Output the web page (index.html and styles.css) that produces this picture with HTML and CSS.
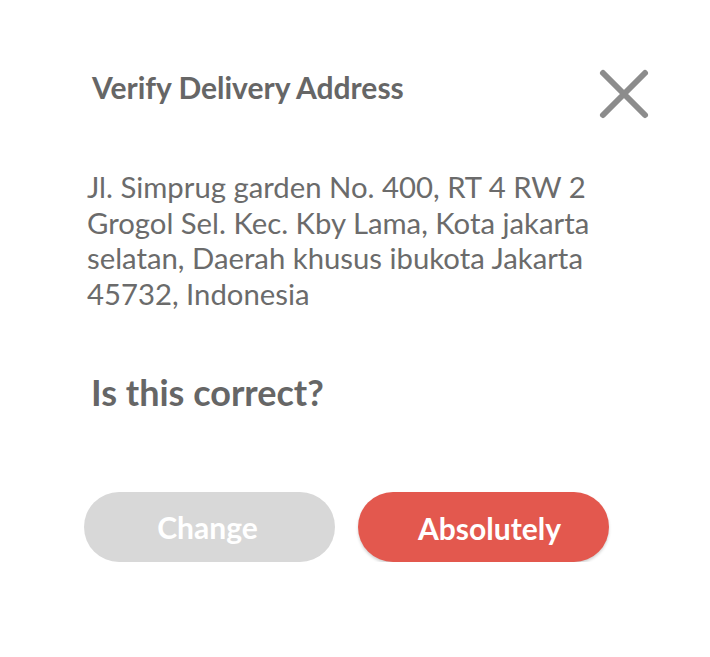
FILE: index.html
```html
<!DOCTYPE html>
<html lang="en">
<head>
<meta charset="utf-8">
<title>Verify Delivery Address</title>
<link rel="stylesheet" href="styles.css">
</head>
<body>
<div class="dialog">
  <div class="header">
    <h1 class="title">Verify Delivery Address</h1>
    <button class="close" aria-label="Close">
      <svg width="52" height="52" viewBox="0 0 52 52">
        <path d="M5 5 L47 47 M47 5 L5 47" stroke="#8c8c8c" stroke-width="6" stroke-linecap="round" fill="none"/>
      </svg>
    </button>
  </div>
  <p class="address">Jl. Simprug garden No. 400, RT 4 RW 2 Grogol Sel. Kec. Kby Lama, Kota jakarta selatan, Daerah khusus ibukota Jakarta 45732, Indonesia</p>
  <p class="question">Is this correct?</p>
  <div class="actions">
    <button class="btn btn-change">Change</button>
    <button class="btn btn-confirm">Absolutely</button>
  </div>
</div>
</body>
</html>
```
FILE: styles.css
```css
html, body {
  margin: 0;
  padding: 0;
  background: #ffffff;
}
body {
  font-family: Lato, "Open Sans", sans-serif;
  color: #666666;
}
.dialog {
  display: flex;
  flex-direction: column;
  padding: 69px 0 0 0;
}
.header {
  display: flex;
  align-items: flex-start;
  justify-content: space-between;
  padding: 0 60px 0 92px;
  height: 36px;
}
.title {
  margin: 0;
  font-size: 30px;
  line-height: 36px;
  font-weight: 700;
  color: #666666;
}
.close {
  margin: -1px 0 0 0;
  padding: 0;
  border: 0;
  background: none;
  width: 52px;
  height: 52px;
}
.close svg {
  display: block;
}
.address {
  margin: 64px 0 0 87px;
  width: 518px;
  font-size: 29.3px;
  line-height: 35.7px;
  color: #6b6b6b;
}
.question {
  margin: 59px 0 0 91px;
  font-size: 36px;
  line-height: 42px;
  font-weight: 700;
  color: #666666;
}
.actions {
  display: flex;
  gap: 23px;
  margin: 79px 0 0 84px;
}
.btn {
  width: 251px;
  height: 70px;
  border: 0;
  border-radius: 35px;
  font-family: Lato, "Open Sans", sans-serif;
  font-size: 30px;
  font-weight: 700;
  color: #ffffff;
  padding: 0;
}
.btn-change {
  background: #d8d8d8;
  padding-right: 4px;
}
.btn-confirm {
  background: #e3584e;
  box-shadow: 0 2px 3px rgba(0, 0, 0, 0.18);
  padding: 2px 0 0 12px;
}
```
